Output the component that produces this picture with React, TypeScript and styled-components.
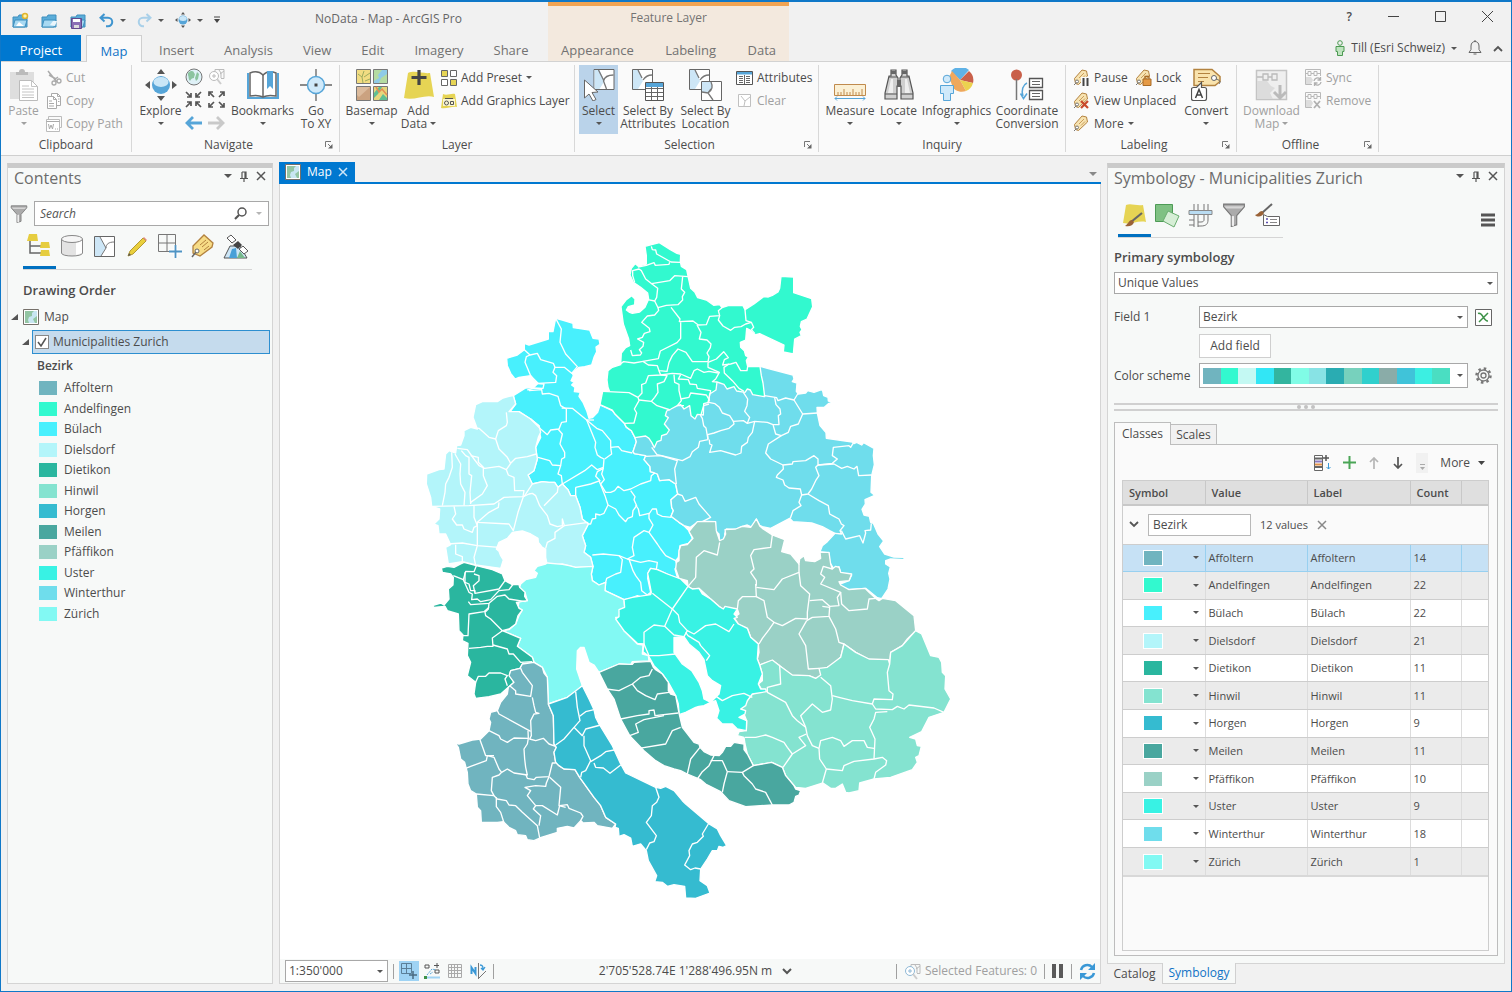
import { useState } from 'react';
import type { ReactNode } from 'react';
import styled, { createGlobalStyle } from 'styled-components';

const GlobalStyle = createGlobalStyle`
  * {
    box-sizing: border-box;
  }

  body {
    margin: 0;
    font-family: "Open Sans", "Noto Sans", sans-serif;
    font-size: 12px;
    line-height: 16px;
    color: #4c4c4c;
  }

  button, input, select {
    margin: 0;
    padding: 0;
    border: 0;
    background: none;
    font: inherit;
    color: inherit;
  }

  svg {
    display: block;
    flex: none;
  }

  h1, h2, h3, ul {
    margin: 0;
    padding: 0;
    font-weight: 400;
    list-style: none;
  }
`;

/* ---------- data ---------- */

const districts = [
  { name: 'Affoltern', color: '#70b4bf', count: 14 },
  { name: 'Andelfingen', color: '#32f9cf', count: 22 },
  { name: 'Bülach', color: '#48f0fd', count: 22 },
  { name: 'Dielsdorf', color: '#b3f5fa', count: 21 },
  { name: 'Dietikon', color: '#2ab69f', count: 11 },
  { name: 'Hinwil', color: '#84e3d0', count: 11 },
  { name: 'Horgen', color: '#35bbd0', count: 9 },
  { name: 'Meilen', color: '#49a79f', count: 11 },
  { name: 'Pfäffikon', color: '#9ad1c6', count: 10 },
  { name: 'Uster', color: '#38f2e4', count: 9 },
  { name: 'Winterthur', color: '#6fddec', count: 18 },
  { name: 'Zürich', color: '#82f9f3', count: 1 },
];

const scheme = [
  '#70b4bf', '#32f9cf', '#c4f9f3', '#32e6f5', '#33b59f', '#80fce6', '#88e3e5',
  '#2aacb2', '#77d1bd', '#30d0cd', '#8aaca8', '#40c3d9', '#3cefe2', '#4adec2',
];

// Every sheet has its own origin, lines are municipality borders
const sheets = [
  {
    x: 0,
    y: 0,
    areas: [
      { color: '#48f0fd', points: '410,268 430,273 462,283 463,296 512,303 522,328 540,330 543,346 531,354 533,368 525,385 518,408 497,413 480,415 460,433 463,440 456,455 466,460 458,468 468,475 466,488 484,490 480,502 492,520 503,545 510,568 520,566 536,550 543,528 580,545 588,555 616,583 622,595 637,605 648,626 652,638 642,668 646,674 680,680 675,692 693,713 694,728 707,732 715,735 722,755 750,752 770,765 776,795 756,812 758,835 763,845 756,862 780,880 795,890 810,905 820,928 808,943 783,950 778,985 770,995 775,1010 768,1020 776,1048 745,1035 715,1022 695,1018 688,1030 686,1048 695,1090 685,1098 670,1105 655,1100 635,1108 615,1112 558,1085 560,1060 540,1068 520,1055 517,1035 522,1012 515,985 495,970 500,950 490,920 508,885 490,870 483,835 470,800 455,800 447,782 430,765 417,775 407,760 390,760 370,758 340,765 327,738 345,725 355,690 350,655 365,625 360,603 360,590 335,570 300,548 270,553 290,525 283,500 320,477 345,475 357,463 345,455 335,440 300,445 288,450 275,433 265,410 263,388 295,378 316,362 316,343 330,348 388,330 388,308 402,308' },
      { color: '#b3f5fa', points: '283,500 290,525 270,548 300,548 335,570 360,590 365,610 358,625 350,655 355,690 345,725 327,738 340,765 370,758 390,760 407,760 417,775 430,765 447,782 455,800 470,800 483,835 490,870 508,885 490,920 500,950 495,970 515,985 522,1012 470,1015 430,1005 385,1010 380,985 380,960 370,955 358,940 357,928 335,915 310,906 280,910 265,928 240,940 232,960 240,967 245,980 253,993 245,1018 170,1008 130,998 88,1005 80,955 95,947 80,915 60,915 57,890 45,885 60,870 62,840 38,832 35,805 22,765 23,735 60,722 75,720 80,675 90,665 110,672 113,650 125,648 135,620 135,605 155,595 175,600 162,565 170,527 190,518 210,517 235,518 252,507 270,502' },
    ],
    lines: [
      '410,268 427,300 423,340 440,375 475,413 458,433 436,415 408,415 403,403 365,392 355,373 333,378 316,362',
      '333,378 322,383 318,400 335,440 357,463 410,460 413,440 402,430 408,415',
      '325,483 345,477 372,478 375,465 345,463',
      '330,485 368,482 370,495 390,493 417,502 425,530 442,540 442,578 428,580 420,600 395,603 385,617 365,600 335,570',
      '417,600 430,615 423,645 437,670 437,685 428,690 425,710 400,708 392,695 357,685',
      '428,537 460,538 503,573 510,590 530,640 528,655 535,678 545,685 555,690 553,715 535,722 518,708 497,725 430,765 427,740 417,735 425,710',
      '503,573 533,598 550,605 575,635 575,655 598,653 608,665 640,672',
      '575,655 578,675 557,690',
      '503,573 525,573',
      '470,775 515,765 543,755 530,742 535,728 553,718 548,735 556,752 545,765 560,790 575,790 587,785 597,772 615,785 635,780 665,765 695,755 697,740 710,730',
      '470,775 470,800',
      '540,755 548,775 558,800 567,828 555,853 543,858 530,855 530,868 520,870 515,885 508,885',
      '567,828 590,840 600,858 620,878 626,868 640,863 642,845 653,830 645,812 648,803 635,785',
      '650,828 658,840 662,860 690,853 690,868 702,888 690,910 675,905 645,925 640,955 645,980 625,990 600,980 553,975 520,978',
      '690,855 700,840 712,840 715,855 730,862 757,865',
      '690,910 715,945 725,960 740,980 770,995',
      '600,980 610,992 605,1030 590,1035 563,1048 560,1060',
      '630,990 642,1025 650,1040 665,1060 668,1085 685,1098',
      '625,990 665,1000 690,995 715,1000 712,1022',
      '165,597 180,598 210,625 230,630 238,605 262,590 265,580 262,550',
      '230,630 240,660 265,685 275,703 290,688 325,683 352,675',
      '115,658 145,662 165,690 180,710 197,718 240,712 262,722 275,703',
      '262,722 268,738 285,745 287,785 315,785 312,803 255,805 225,825 150,830 38,832',
      '98,670 100,715 90,745 80,765 78,790 70,830',
      '108,675 125,705 123,735 125,765 138,790 135,830',
      '127,665 140,680 150,685 150,735 158,740 153,790 155,825',
      '155,680 178,685 178,700 193,715 193,740 205,770 190,795 155,820',
      '240,820 238,835 210,850 175,880 270,885 283,905 297,850 313,803 330,795 340,793 350,800 362,830 385,860 393,885 415,893 430,890 430,870 436,890 508,880',
      '375,830 415,790 417,775',
      '340,765 315,803',
      '436,890 408,910 408,928 385,940 380,958',
      '105,832 110,855 100,870 113,888 130,888 135,900 160,910 165,895 175,890 165,865 165,830',
      '175,880 175,950 240,955',
      '85,945 130,942 175,950 165,985 170,1010',
      '110,947 110,975 130,983 130,998',
    ],
  },
  {
    x: 510,
    y: 0,
    areas: [
      { color: '#6fddec', points: '513,412 535,418 612,438 615,450 610,458 624,462 622,487 628,495 650,492 656,485 675,490 700,481 704,500 717,505 718,516 735,519 718,524 706,535 684,535 685,552 693,590 711,611 712,628 790,639 795,644 803,640 818,648 824,641 855,658 853,680 856,707 848,740 846,790 857,799 828,812 829,825 819,841 825,858 841,862 845,880 853,883 867,915 884,936 872,953 887,975 915,984 945,985 945,992 905,990 890,995 890,1005 904,1014 899,1033 903,1050 897,1080 878,1109 865,1106 845,1090 830,1078 770,1082 757,1075 753,1065 780,1055 788,1038 755,1033 750,1013 735,1020 722,1000 720,972 693,968 700,950 715,938 738,913 722,905 700,893 668,882 612,878 602,868 545,898 520,893 512,889 502,870 490,895 475,888 457,893 440,902 412,900 407,915 409,930 400,938 392,938 390,915 379,905 379,878 357,877 328,878 304,895 285,890 270,880 246,862 253,845 248,835 246,812 266,795 260,765 240,752 212,755 205,735 197,732 184,728 183,713 165,692 170,680 136,674 132,668 142,638 138,626 180,600 230,530 384,440' },
      { color: '#32f9cf', points: '168,52 211,41 244,62 264,73 275,76 274,98 277,112 293,122 298,146 305,178 318,190 326,206 352,213 374,229 392,227 399,236 420,229 462,230 468,242 474,238 495,225 524,203 538,204 550,199 567,189 572,178 576,142 614,144 614,191 668,209 671,233 654,270 637,278 634,292 639,302 633,310 637,320 617,330 613,375 583,369 585,348 512,314 498,318 483,303 473,298 470,333 454,340 455,355 466,365 470,380 478,384 472,395 476,413 513,412 517,440 522,462 527,503 491,497 484,483 475,480 468,490 443,486 435,473 414,480 405,466 384,459 381,483 362,495 359,520 344,524 343,558 325,556 318,570 306,560 302,530 285,540 275,527 265,530 246,540 233,546 229,560 238,566 226,585 241,603 233,615 218,620 216,634 204,638 196,656 188,640 180,628 170,621 138,626 127,605 112,594 106,583 78,555 70,543 33,527 41,487 61,485 57,475 54,453 57,425 70,415 95,407 97,372 110,356 122,350 119,330 103,285 96,233 112,212 128,200 138,210 137,228 118,233 112,243 122,250 130,253 152,249 168,235 179,210 176,192 155,175 133,160 123,138 127,118 139,104 147,111 172,105 172,80' },
    ],
    lines: [
      '187,52 190,62 200,63 203,75 246,99 274,100',
      '147,114 172,109 195,101 199,109 240,106 242,100',
      '137,160 131,140 131,125 150,120 157,125 170,150 188,164 242,155 257,140 297,143',
      '188,164 206,178 203,205 197,216 176,212',
      '281,143 277,180 287,190 280,203 281,213 267,227 232,229 207,236 203,228 197,216',
      '207,236 209,244 197,258 175,261 158,280 181,298 183,308 166,313 160,325 146,330 164,340 162,352 151,362 158,372 154,378 130,380 125,363',
      '246,235 273,270 271,278 312,276 328,288 352,287 362,262 392,260 388,245 399,236',
      '275,280 275,328 264,341 214,366 208,389 162,397 135,402 104,398 95,404',
      '324,288 336,310 331,330 354,333 366,345 364,356 354,372 360,383 357,398 310,398 291,370 267,360 250,380 240,400 234,427 210,425 205,410 178,408 162,397',
      '392,260 388,273 402,291 425,304 437,295 456,293 470,285 487,280 494,295 487,302 498,314',
      '468,242 471,275 487,280',
      '357,400 382,390 404,368 418,386 406,392 401,408 425,405 441,400 455,425 474,425 476,413',
      '357,400 357,415 391,430 380,450 370,458 384,459',
      '420,405 405,415 406,432 430,455 450,478 465,487',
      '215,438 250,433 275,435 305,448 315,425 325,420 345,430 360,427 388,432',
      '210,425 215,438 178,440 170,462 158,467 159,492 147,505 120,491 41,487',
      '147,505 150,515 136,540 143,552 135,582 106,583',
      '150,513 187,517 204,530 244,543',
      '187,517 197,505 207,490 205,465 225,458 234,440 215,438',
      '255,437 257,460 270,466 270,485 277,515 265,530 285,530',
      '275,437 268,450 298,452 303,465 322,467 325,478 365,485 357,520',
      '275,510 300,505 305,492 352,498 362,515',
      '527,500 563,506 567,515 590,507 615,513 626,495 630,490',
      '557,506 561,527 573,540 575,555 568,560 570,587 552,587',
      '615,513 641,555 685,552',
      '641,555 628,585 605,592 598,610 577,620 560,615 552,587 535,580 497,577 475,583 463,575 433,577 422,560 400,552 391,535 378,524 359,520',
      '463,490 476,510 474,530 467,547 482,565 475,583',
      '360,525 344,530 335,560 340,568 344,590 351,597 357,632 332,637 328,655 310,668 303,683 280,695 218,680 204,677 188,655',
      '361,632 362,645 369,648 362,670 395,665 440,678 456,672 458,652 475,640 478,625 490,610 497,577',
      '357,630 356,617 375,612 395,605 420,598 435,585 433,577',
      '577,620 538,645 530,672 545,690 582,708 610,705 612,698 650,695 675,680 687,690 687,708 730,703 745,690 730,680 733,655 780,650 785,655 792,643',
      '687,708 735,705 758,718 775,712 795,720 804,712 809,740 848,738',
      '582,708 583,720 565,738 562,745 582,753 587,768 600,777 634,780 638,798 657,795 668,780 680,755 690,740 680,715 687,708',
      '638,798 630,820 636,830 612,845 604,868',
      '657,795 690,815 718,830 722,855 735,862 750,870 757,885 765,890 753,905 758,915 738,913',
      '757,905 770,930 812,920 822,942 830,912 828,905 845,903 847,883',
      '170,682 215,680 265,695 257,720 262,765',
      '266,795 280,800 288,817 320,805 330,825 350,848 365,865 340,878',
    ],
  },
  {
    x: 0,
    y: 930,
    areas: [
      { color: '#82f9f3', points: '345,95 355,82 380,75 385,72 430,76 450,80 470,85 522,82 517,105 520,125 540,138 560,130 558,155 615,182 617,205 605,212 600,235 590,235 615,275 655,315 672,318 670,345 688,350 690,366 640,368 635,378 600,375 540,400 525,378 510,370 495,325 485,325 475,335 473,390 490,440 470,458 445,475 388,495 385,415 370,385 345,370 340,355 295,322 305,298 250,275 270,272 290,255 300,230 310,213 297,205 300,188 325,185 318,160 300,150 305,135 320,122 350,115 355,103' },
      { color: '#2ab69f', points: '67,87 85,82 105,85 125,75 135,70 172,80 220,92 250,105 258,125 280,137 300,137 302,145 318,160 317,172 325,185 292,190 300,208 310,213 297,230 290,255 270,270 250,275 305,298 295,322 340,355 345,370 310,375 303,388 275,395 272,408 285,430 268,445 245,465 210,473 170,478 165,465 170,430 145,410 155,370 145,350 147,313 130,305 132,288 120,275 118,225 85,215 78,202 45,205 40,200 65,192 75,198 90,180 88,150 102,138 103,115 95,105 70,100' },
      { color: '#70b4bf', points: '310,375 345,370 370,385 375,402 385,415 388,495 403,530 405,615 412,625 405,640 410,670 420,680 435,690 468,692 482,715 525,775 545,800 560,835 590,855 580,868 535,860 525,850 492,852 485,845 465,867 445,862 415,868 415,880 362,897 345,905 325,902 320,890 295,887 290,875 270,865 253,848 235,850 187,850 185,815 175,805 172,765 155,755 147,735 145,700 137,670 125,660 118,625 108,612 120,615 160,603 185,600 210,575 215,550 210,540 215,520 235,515 245,490 265,465 268,445 285,430 270,410 275,395 303,388' },
      { color: '#35bbd0', points: '388,495 445,475 490,440 510,480 525,512 530,535 540,555 580,620 605,675 620,702 710,745 725,748 740,742 765,755 790,785 800,795 868,853 895,870 905,890 923,920 912,925 900,922 895,935 880,935 865,960 845,990 843,1025 865,1040 873,1062 830,1078 800,1077 797,1042 765,1037 745,1042 730,1030 707,1028 713,1010 688,965 682,935 665,915 640,922 635,897 615,887 600,892 598,868 588,865 590,855 560,835 545,800 525,775 482,715 468,692 435,690 420,680 410,670 405,640 412,625 405,615 403,530' },
    ],
    lines: [
      '103,110 133,122 140,97 165,98 172,80',
      '138,100 138,130 150,135 155,155 168,155 168,163 163,140 180,125 180,110 165,105',
      '133,122 150,160 160,165 158,182 175,180 185,188 215,182 240,155 270,152 283,135',
      '258,125 240,150 168,163',
      '148,188 155,197 210,193 235,172 258,168 270,180 320,188',
      '210,193 208,210 198,220 200,230 215,240 250,275 220,297 222,322 205,322 185,325 150,328',
      '210,205 195,218 150,225 147,290 130,290',
      '222,318 265,330 270,345 283,345 305,370 340,368',
      '170,430 178,412 200,412 210,402 245,402 265,410 258,420 265,440',
      '272,440 290,455 290,465 335,472 340,440 310,400 305,388',
      '235,515 240,525 335,577',
      '340,475 345,500 350,520 360,523 345,525 335,545 337,590 332,600 350,605 373,598 390,615 410,622',
      '210,575 240,590 245,600 265,610 285,597 328,598 327,575',
      '328,598 325,615 315,630 317,660 320,685 325,708 285,702 265,690 248,700 240,690 225,655 205,650 202,665 155,682 140,688',
      '182,600 193,630 200,650 225,650',
      '320,705 325,718 345,722 352,715 390,713 400,672 410,672',
      '248,700 240,708 220,715 217,755 225,770 172,765',
      '225,770 235,780 262,785 270,798 290,800 310,820 355,860 362,897',
      '232,775 232,803 245,820 255,852',
      '390,713 382,732 380,742 350,740 318,745 335,755 325,770 350,800 370,800 415,828 422,800 445,797 450,808 485,822 492,832 485,845 492,852',
      '392,715 425,745 420,800 440,805',
      '350,800 343,810 365,830 360,860',
      '470,458 475,505 483,545 465,565 435,600 410,618',
      '482,532 500,518 525,512',
      '465,565 490,590 500,570 545,558',
      '495,590 495,620 515,665 500,695 488,700 485,715',
      '515,668 545,650 560,638 585,633',
      '525,672 530,685 553,687 573,703 605,678',
      '710,745 720,775 713,790 700,800 697,830 682,850 712,890 705,908 692,912 682,932',
      '868,855 850,885 853,892 835,910 820,915 810,935 812,950 797,978 815,992 828,987 845,990',
    ],
  },
  {
    x: 600,
    y: 840,
    areas: [
      { color: '#9ad1c6', points: '207,232 205,215 180,208 170,180 172,160 180,155 180,125 185,110 205,107 222,88 210,68 220,55 235,38 290,38 292,65 302,95 313,90 320,75 318,62 350,60 370,52 395,55 412,30 423,52 430,58 460,78 497,92 488,128 515,135 540,165 542,150 555,140 560,155 587,158 605,148 603,130 630,130 635,165 640,180 650,172 660,175 665,190 698,195 690,215 660,218 665,228 690,242 738,238 750,250 770,268 780,275 790,268 830,275 885,320 890,365 865,390 850,410 830,422 815,430 812,465 750,452 710,430 675,405 665,445 640,468 625,475 605,505 590,508 570,500 520,500 482,470 460,455 422,468 415,450 420,430 418,405 395,385 385,358 358,345 345,325 360,315 355,300 310,300 300,292 275,270 240,238 220,240' },
      { color: '#84e3d0', points: '890,365 908,375 935,440 960,445 968,460 970,490 980,500 978,540 995,570 975,610 930,625 908,668 872,685 890,690 895,710 907,712 900,740 890,745 895,760 880,782 815,805 765,810 722,822 720,845 690,852 680,850 670,825 650,838 635,838 612,822 560,838 530,835 500,800 490,775 458,760 403,770 385,735 378,705 375,685 355,680 360,668 382,665 383,635 375,615 365,600 385,575 400,555 430,545 418,525 430,515 430,495 422,468 460,453 482,470 520,498 570,500 590,508 605,498 600,478 625,475 665,445 675,405 710,430 750,450 808,452 812,465 815,430 850,410' },
      { color: '#38f2e4', points: '86,193 95,178 115,182 145,195 185,210 207,232 220,240 240,238 250,255 275,270 300,292 313,300 318,292 355,300 345,315 355,325 345,328 358,345 385,358 395,385 418,405 415,450 422,468 430,495 418,525 425,540 440,540 442,548 400,555 385,575 380,590 365,600 380,605 378,615 360,625 383,635 382,665 355,660 340,645 310,645 293,628 300,605 290,575 275,580 255,590 240,592 230,595 200,610 180,617 180,612 178,585 170,560 148,520 130,495 105,470 88,440 72,428 75,405 55,403 15,365 -10,330 0,323 0,302 17,295 15,272 40,265 95,257 97,250' },
      { color: '#49a79f', points: '-60,490 0,465 40,466 45,460 95,457 103,475 110,482 130,495 148,520 148,545 155,555 170,560 180,612 190,655 225,700 240,705 243,715 255,728 275,738 300,740 310,730 320,712 335,712 345,700 375,705 375,722 385,735 403,770 458,760 490,775 500,800 525,830 530,840 545,845 540,858 530,862 525,880 510,888 460,888 380,893 330,875 305,848 260,825 245,812 205,795 185,785 165,780 135,770 110,755 75,725 32,680 5,630 -15,570 -35,540' },
      { color: '#ffffff', points: '165,385 195,383 210,405 240,430 255,452 265,500 280,515 305,530 300,555 275,580 255,570 250,545 240,520 218,485 190,465 165,430' },
    ],
    lines: [
      '-38,540 0,545 40,525 65,505 90,500 100,480',
      '40,525 55,545 80,560 108,572 115,555 150,550',
      '5,630 55,620 90,615 90,605 105,603 108,620 178,612',
      '32,680 58,670 50,645 75,632 135,620',
      '60,718 140,705 160,665 185,655',
      '205,795 215,750 243,715',
      '235,810 250,788 270,770 285,740',
      '275,755 310,755 325,788 315,825 310,850',
      '325,788 370,790 403,770',
      '370,790 375,800 400,825 410,840 440,850 460,888',
      '100,253 160,300 207,232',
      '160,300 137,352 105,348 75,370 75,405 90,440',
      '160,300 178,318 182,340 205,365 225,375 260,350 290,345 330,368 345,345',
      '137,352 165,378 195,383 205,365',
      '200,370 207,380 240,400 245,410 272,440 262,455',
      '88,440 120,440 170,435',
      '288,560 310,575 340,560 375,553 400,565',
      '207,232 230,205 232,145 255,125 295,138 302,100',
      '410,225 412,263 370,263 358,275 355,300',
      '412,263 435,275 445,325 465,340 450,362 430,388 420,405',
      '412,230 412,215 395,190 405,180 395,140 405,122 455,115 460,78',
      '412,235 465,242 490,210 540,190 540,165',
      '540,190 545,230 572,255 565,310 565,330 530,328 490,350 465,340',
      '563,335 580,325 630,322 632,295 610,292',
      '572,275 610,272 632,292 660,290 655,265 665,250 605,225 617,205 605,195 613,172 640,180',
      '630,322 650,360 660,400 675,405',
      '563,335 540,375 560,410 568,480 600,478',
      '665,250 668,285 690,305 745,300 750,270 770,268',
      '482,470 485,525 445,535 445,550 500,580 520,620 535,635 560,655',
      '605,505 635,530 640,570 635,603 610,610 580,585 545,620 560,655 565,680 580,710 600,718',
      '640,560 660,565 700,575 760,585 765,570 820,572 822,555 810,545 805,490 812,465',
      '760,585 770,600 820,602 835,592 855,600 870,588 945,597 975,610',
      '805,608 770,610 765,630 752,655 768,690 765,750',
      '600,718 605,695 640,685 665,695 675,712 700,695 735,695 745,715 765,718',
      '600,718 602,750 622,780 610,822',
      '622,780 670,785 675,770 705,757 765,750 790,745 803,755 800,768 770,790 765,810',
      '378,685 410,685 440,678 460,685 495,700 505,715 520,735 492,775',
      '520,735 560,710 540,685 562,675',
    ],
  },
];

/* ---------- small drawings ---------- */

type IconProps = { size?: number; w?: number; box?: string; children: ReactNode };

const Icon = ({ size = 16, w, box, children }: IconProps) => (
  <svg width={w ?? size} height={size} viewBox={box ?? `0 0 ${w ?? size} ${size}`} fill="none" aria-hidden="true">
    {children}
  </svg>
);

const Caret = ({ color = '#555' }: { color?: string }) => (
  <Icon size={3} w={6}><path d="M0 0h6L3 3z" fill={color} /></Icon>
);

const Cross = ({ color = '#555' }: { color?: string }) => (
  <Icon size={10}><path d="M1 1l8 8M9 1L1 9" stroke={color} strokeWidth="1.5" /></Icon>
);

const Pin = () => (
  <Icon size={11} w={8}><path d="M2 1v6M2 1h4v6M5 1v6M0 7.500h8M4 8v3" stroke="#555" strokeWidth="1.200" /></Icon>
);

const Launcher = () => (
  <Icon size={8}><path d="M.5 6V.5H6M3 3l3 3" stroke="#777" /><path d="M7.500 3v4.500H3z" fill="#666" /></Icon>
);

const ExploreIcon = ({ size = 32 }: { size?: number }) => (
  <Icon size={size} box="0 0 32 32">
    <circle cx="16" cy="16" r="9" fill="#56a5d8" />
    <ellipse cx="16" cy="13" rx="7.500" ry="5" fill="#c9e6f7" />
    <path d="M16 0l4 5h-8zM16 32l4-5h-8zM0 16l5-4v8zM32 16l-5-4v8z" fill="#555" />
  </Icon>
);

const PasteIcon = () => (
  <Icon size={32} w={30}>
    <path d="M1 3h24v27H1z" fill="#dedede" />
    <path d="M7 6h12V3h-3a3 3 0 00-6 0H7z" fill="#bbb" />
    <path d="M10.500 11.500h12l6 6v14h-18z" fill="#fff" stroke="#bbb" />
    <path d="M22.500 11.500v6h6M13 17h7M13 20h12M13 23h12M13 26h12M13 28.500h12" stroke="#c4c4c4" />
  </Icon>
);

const CutIcon = () => (
  <Icon><path d="M2 1l9 11M3 5l7 4M12 7l-4 3" stroke="#aaa" strokeWidth="1.500" /><circle cx="8" cy="13" r="2" stroke="#aaa" strokeWidth="1.300" /><circle cx="13" cy="11" r="2" stroke="#aaa" strokeWidth="1.300" /></Icon>
);

const CopyIcon = () => (
  <Icon><path d="M5.500 3.500v-3h6l3 3v9h-4M1.500 3.500h6l3 3v9h-9z" stroke="#aaa" fill="#fff" /><path d="M7.500 3.500v3h3M3 8h3M3 10.500h5M3 13h5M11.500.5v3h3M12 6h1.500M12 8.500h1.500" stroke="#aaa" /></Icon>
);

const CopyPathIcon = () => (
  <Icon><path d="M2.500 3V.5h13v11H14" stroke="#bbb" /><path d="M.5 3.500h13v12H.5z" fill="#fff" stroke="#bbb" /><path d="M.5 5.500h13M2.500 8l1 5 1.500-4 1.500 4 1-5M9 13h1M11 13h1" stroke="#aaa" /></Icon>
);

const GlobeIcon = () => (
  <Icon size={18}><circle cx="9" cy="9" r="8" fill="#dff1f7" stroke="#777" /><path d="M3 5c3-3 6-2 6 0 2 1 0 3 0 5-2 0-3 1-4 3C3 11 4 9 3 7zM12 4l2 2-1 5-2 2-1-3z" fill="#8cc4a0" /></Icon>
);

const ZoomSelIcon = ({ color = '#bbb' }: { color?: string }) => (
  <Icon size={17}><path d="M7 4.500V1.500h9v9h-3M11 2l2 3v5M16 3l-4 3" stroke="#bbb" /><circle cx="6" cy="8" r="4.500" fill="#fff" stroke={color} /><path d="M4 8h4M6 6v4" stroke={color} /><path d="M9 11l4 5" stroke="#ccc" strokeWidth="2" /></Icon>
);

const arrowHeads = {
  in: 'M1 1l5 5M6 2v4H2M16 1l-5 5M11 2v4h4M1 16l5-5M2 11h4v4M16 16l-5-5M15 11h-4v4',
  out: 'M6 6L1 1M1 5V1h4M11 6l5-5M12 1h4v4M6 11l-5 5M1 12v4h4M11 11l5 5M16 12v4h-4',
};

const FixedZoomIcon = ({ kind }: { kind: 'in' | 'out' }) => (
  <Icon size={17}><path d={arrowHeads[kind]} stroke="#555" strokeWidth="1.700" /></Icon>
);

const BackIcon = ({ color, flip }: { color: string; flip?: boolean }) => (
  <Icon size={14} w={17}><path d={flip ? 'M0 7h15M9 1l6 6-6 6' : 'M17 7H2M8 1L2 7l6 6'} stroke={color} strokeWidth="2.800" /></Icon>
);

const BookIcon = () => (
  <Icon size={30} w={34}>
    <path d="M2 3v25h30V3" stroke="#56a5d8" strokeWidth="2" />
    <path d="M4 3c5-2 10-1 13 2 3-3 8-4 13-2v23c-5-1-9-1-13 1-4-2-8-2-13-1z" fill="#fff" stroke="#666" strokeWidth="1.500" />
    <path d="M17 5v22" stroke="#666" strokeWidth="1.500" />
    <path d="M21 1h6v18l-3-3-3 3z" fill="#56a5d8" />
  </Icon>
);

const GoToIcon = () => (
  <Icon size={32}><path d="M16 0v7M16 25v7M0 16h7M25 16h7" stroke="#666" strokeWidth="1.300" /><circle cx="16" cy="16" r="8.500" fill="#cfe9fa" stroke="#56a5d8" strokeWidth="1.500" /><path d="M14.500 14.500h3v3h-3z" fill="#444" /></Icon>
);

const BasemapIcon = () => (
  <Icon size={32}>
    <path d="M.5.500h14v14H.5z" fill="#f2dc82" stroke="#777" /><path d="M2 5l4 3 2-6M6 8l1 6M8 8l6-4M9 12l5-2" stroke="#9dab5e" />
    <path d="M17.500.500h14v14h-14z" fill="#8fcbe8" stroke="#777" /><path d="M18 1h8l-4 5 1 3-5 3zM25 9l6-4v9h-8z" fill="#b5dba2" />
    <path d="M.5 17.500h14v14H.5z" fill="#cba280" stroke="#777" /><path d="M1 18h13L3 28l-2-2z" fill="#dcbb9d" />
    <path d="M17.500 17.500h14v14h-14z" fill="#e6d67c" stroke="#777" /><path d="M18 24l5-6h3l-4 7-4 4zM23 31l4-6 4 4v2z" fill="#5fbf93" /><path d="M20 18l3 5 3-3 5 6" stroke="#e28d55" strokeWidth="1.500" />
  </Icon>
);

const AddDataIcon = () => (
  <Icon size={32}><path d="M5 4c7-3 15 1 22 0l4 24c-9-3-20 4-30 1z" fill="#e6d454" /><path d="M16 1v15M8.500 8.500h15" stroke="#444" strokeWidth="3.200" /></Icon>
);

const PresetIcon = () => (
  <Icon><path d="M.5.500h6v6h-6zM9.500 9.500h6v6h-6z" fill="#e6d454" stroke="#666" /><path d="M9.500.500h6v6h-6zM.5 9.500h6v6h-6z" fill="#fff" stroke="#666" /></Icon>
);

const GraphicsIcon = () => (
  <Icon><path d="M2 1c4 2 8-1 12 0l2 13c-5-1-10 2-16 1z" fill="#e6d454" /><path d="M2 6h12v7H2z" fill="#f9f5d0" /><circle cx="5.500" cy="10" r="2" stroke="#555" /><path d="M9.500 8.500h3v3h-3zM4 5.500h8" stroke="#555" /></Icon>
);

const parcel = 'M.5.500h20v20H.5z';

const SelectIcon = () => (
  <Icon size={32}>
    <g transform="translate(10.500 0)"><path d={parcel} fill="#fff" stroke="#666" /><path d="M1 1h5l5 11-5 8H1z" fill="#cde6f6" /><path d="M5 1l5 10M20 6c-5 0-9 2-10 6l3 8" stroke="#777" strokeWidth="1.300" /></g>
    <path d="M1.500 11l13.500 12-6 .5 4 7-3 1.500-4-7-4.500 4z" fill="#fff" stroke="#666" />
  </Icon>
);

const SelectAttrIcon = () => (
  <Icon size={32}>
    <path d={parcel} fill="#fff" stroke="#666" /><path d="M1 1h5l5 11-5 8H1z" fill="#cde6f6" /><path d="M6 1l4 8M20 6c-4 0-7 2-9 5" stroke="#777" strokeWidth="1.300" />
    <path d="M13.500 13.500h18v18h-18z" fill="#fff" stroke="#555" /><path d="M14 14h17v4H14z" fill="#56a5d8" /><path d="M14 19.500h17M14 23.500h17M14 27.500h17M19.500 18v13M25.500 18v13" stroke="#666" />
  </Icon>
);

const SelectLocIcon = () => (
  <Icon size={32} w={33}>
    <path d={parcel} fill="#fff" stroke="#666" /><path d="M1 1h5l5 11-5 8H1z" fill="#cde6f6" /><path d="M6 1l4 8M20 6c-4 0-7 2-9 5" stroke="#777" strokeWidth="1.300" />
    <path d="M12.500 12.500h20v19h-20z" fill="#fff" stroke="#666" /><path d="M13 13h9c3 6 0 9-3 11l-6-1z" fill="#cde6f6" /><path d="M22 13c3 6 0 9-3 11l5 7M13 23l6 1 3-4" stroke="#777" strokeWidth="1.300" />
  </Icon>
);

const AttributesIcon = () => (
  <Icon size={14} w={17}><path d="M.5.500h16v13H.5z" fill="#fff" stroke="#555" /><path d="M1 1h15v2.500H1z" fill="#56a5d8" /><path d="M3 5.500h4M3 7.500h4M3 9.500h4M3 11.500h4M10 5.500h4M10 7.500h4M10 9.500h4M10 11.500h4M8.500 4v9" stroke="#666" /></Icon>
);

const ClearIcon = () => (
  <Icon size={13} w={17} box="-2 0 17 13"><path d="M.5.500h12v12H.5z" stroke="#c0c0c0" fill="#fff" /><path d="M3 2l4 5 5-4M7 7l-1 5" stroke="#c0c0c0" /></Icon>
);

const MeasureIcon = () => (
  <Icon size={32}><path d="M.5 15.500h31v11H.5z" fill="#fbf0d5" stroke="#c08a4d" /><path d="M4 27v-4M7 27v-4M10 27v-7M13 27v-4M16 27v-4M19 27v-7M22 27v-4M25 27v-4M28 27v-7" stroke="#c08a4d" /><path d="M1 29.500h30M3 27.500l-2 2 2 2M29 27.500l2 2-2 2" stroke="#56a5d8" /></Icon>
);

const LocateIcon = () => (
  <Icon size={32} w={30}>
    <path d="M7 1h5v5l2 3v8h-1v13H1V24L5 7h2zM23 1h-5v5l-2 3v8h1v13h12v-6L25 7h-2z" fill="#cfcfcf" stroke="#555" strokeWidth="1.200" />
    <path d="M7 2h5v3H7zM18 2h5v3h-5zM13 11h4v7h-4z" fill="#666" />
    <path d="M1 25h12M17 25h12M5 8h8M17 8h8" stroke="#555" />
    <path d="M7 10L4 24h5V10z" fill="#eee" /><path d="M21 10v14h5L23 10z" fill="#eee" />
  </Icon>
);

const InfographicsIcon = () => (
  <Icon size={33} w={34}>
    <path d="M20 12L11 3a13 13 0 0118-1z" fill="#5fb2e6" /><path d="M20 12l9-9a12 12 0 014 12z" fill="#c9604a" /><path d="M20 12l13 3a12 12 0 01-7 8z" fill="#ecd24f" /><path d="M20 12l6 11c-5 2-13 0-14-6L9 9l3-6z" fill="#efa85c" />
    <circle cx="7" cy="11" r="3.800" fill="#cfe9fa" stroke="#56a5d8" /><path d="M.5 17.500h13v8h-3v7h-7v-7h-3z" fill="#cfe9fa" stroke="#56a5d8" />
  </Icon>
);

const CoordIcon = () => (
  <Icon size={32} w={33}>
    <circle cx="5.500" cy="6" r="5.500" fill="#c9604a" /><path d="M5.500 10v21" stroke="#777" strokeWidth="1.500" />
    <path d="M18.500 9.500h13v9h-13zM18.500 21.500h13v9h-13z" fill="#fff" stroke="#555" strokeWidth="1.300" /><path d="M21 12.500h8M21 15.500h8M21 24.500h8M21 27.500h8" stroke="#666" />
    <path d="M16 14c-4 2-6 7-4 13M9.500 24.500l3 5 3.500-5" stroke="#56a5d8" strokeWidth="1.500" />
  </Icon>
);

const tag = 'M1.500 9.500L9 1l4.500 1 1 5-9 8.500-3-1z';

const TagIcon = ({ mark }: { mark?: 'pause' | 'lock' | 'cross' }) => (
  <Icon size={17}>
    <path d={tag} fill="#f7e3b1" stroke="#b3823f" /><path d="M6 9l5-5M8 10.500l4-4" stroke="#c99c5a" /><circle cx="4" cy="12.500" r="1.500" fill="#fff" stroke="#777" /><path d="M3 14l-2 2" stroke="#777" />
    {mark === 'pause' && <><path d="M8 8h9v9H8z" fill="#fafafa" /><path d="M10.500 9v8M14.500 9v8" stroke="#444" strokeWidth="2" /></>}
    {mark === 'lock' && <><path d="M8 10h8v6.500H8z" fill="#e59a45" stroke="#a86b26" /><path d="M10 10V7.500h4V10" stroke="#a86b26" strokeWidth="1.300" /></>}
    {mark === 'cross' && <path d="M8 9l7 7M15 9l-7 7" stroke="#c8492b" strokeWidth="2.200" />}
  </Icon>
);

const ConvertIcon = () => (
  <Icon size={33} w={31}>
    <path d="M3 1.500h18l8 7v5l-5 4H3z" fill="#f9e3ad" stroke="#b3823f" strokeWidth="1.500" /><path d="M7 5.500h12M7 9.500h10M7 13.500h6" stroke="#b3823f" /><circle cx="23" cy="10" r="2.500" fill="#fff" stroke="#666" /><path d="M25 11c4 1 5 3 3 5" stroke="#666" />
    <path d="M.5 21.500q0-2 2-2h3l5-5v5h3q2 0 2 2v9q0 2-2 2h-11q-2 0-2-2z" fill="#fff" stroke="#555" strokeWidth="1.200" /><path d="M4.500 30L8 21.500l3.500 8.500M6 27h4" stroke="#444" strokeWidth="1.500" />
  </Icon>
);

const DownloadIcon = () => (
  <Icon size={32} w={33}><path d="M1.500 1.500h30v29h-30z" fill="#efefef" stroke="#c4c4c4" strokeWidth="1.500" /><path d="M2 8h6v-3h5v6H8V8M13 8h4V5h5v6h-5V8" stroke="#bbb" strokeWidth="1.300" /><path d="M2 12h10l4 5 4 2-5 5 3 6H2z" fill="#dcdcdc" /><path d="M25 16v12M19 23l6 6 6-6" stroke="#bbb" strokeWidth="3" /></Icon>
);

const SyncIcon = ({ remove }: { remove?: boolean }) => (
  <Icon size={17}><path d="M.5 15.500V.5h15V7M.5 15.500H7M1 4.500h2V2.500h3v4H3v-2M6 4.500h3V2.500h3v4H9v-2M12 4.500h3" stroke="#b9b9b9" /><path d="M1 8h5l2 3-2 4H1z" fill="#ddd" />
    {remove ? <path d="M9 9l6 7M15 9l-6 7" stroke="#b0b0b0" strokeWidth="1.800" /> : <path d="M9 12a3.500 3.500 0 016-2M15.500 8v3h-3M16 13a3.500 3.500 0 01-6 2M9.500 17v-3h3" stroke="#b0b0b0" strokeWidth="1.300" />}
  </Icon>
);

const MapIcon = () => (
  <Icon size={16}><path d="M.5.500h15v15H.5z" fill="#fff" stroke="#75706a" /><path d="M2 2h12v12H2z" fill="#c8e6f2" /><path d="M2 2h9l-2 2v3l-3 1-1 3 1 3H2zM10 10l4-3v7h-2z" fill="#93c5a3" /></Icon>
);

const FunnelIcon = ({ size = 18 }: { size?: number }) => (
  <Icon size={size} box="0 0 20 22"><path d="M.5 1h19v2.500l-7 8V20l-5 1.500v-10l-7-8z" fill="#ababab" stroke="#777" /><path d="M1 3h18l-2 2H3z" fill="#d5d5d5" /><path d="M8 12h2v9H8z" fill="#eee" /></Icon>
);

const FolderIcon = ({ extra }: { extra?: 'new' | 'save' }) => (
  <Icon size={17} w={18}>
    <path d="M1 5h5l1-2h8v12H1z" fill="#5badd9" stroke="#3f8fbe" /><path d="M3 8h12l-2 7H1z" fill="#a8d9f2" stroke="#3f8fbe" />
    {extra === 'new' && <><path d="M4 14l3-4 5 4z" fill="#fff" /><circle cx="13" cy="4" r="2.500" fill="#fff3a8" stroke="#e0b52d" strokeWidth="1.500" /></>}
    {extra === 'save' && <><path d="M1.500 6.500h10v10h-10z" fill="#8a6fb5" stroke="#60498c" /><path d="M3 7h7v3H3z" fill="#fff" /><path d="M4 13h5v3H4z" fill="#ddd" /></>}
    {!extra && <path d="M9 13l3-4 4 0-2 5z" fill="#eaf6fc" />}
  </Icon>
);

const UndoIcon = ({ color, flip }: { color: string; flip?: boolean }) => (
  <Icon size={15}><path d={flip ? 'M9.500 1l4 3.800-4 3.700M13 4.800H6a4 4 0 000 8.500h1' : 'M5.500 1l-4 3.800 4 3.700M2 4.800h7a4 4 0 010 8.500H7'} stroke={color} strokeWidth="2" /></Icon>
);

/* ---------- window ---------- */

const Window = styled.div`
  display: flex;
  flex-direction: column;
  min-height: 100vh;
  background: #f1f1f1;
  border: 1px solid #0f78c8;
  border-top-width: 2px;
`;

const Header = styled.header`
  display: flex;
  height: 60px;
  border-bottom: 1px solid #d2d2d2;
`;

const HeaderColumn = styled.div<{ $width?: number }>`
  display: flex;
  flex-direction: column;
  justify-content: space-between;
  ${(props) => (props.$width ? `width: ${props.$width}px;` : 'flex: 1;')}
`;

const ContextColumn = styled.div`
  display: flex;
  flex-direction: column;
  justify-content: space-between;
  width: 241px;
  border-top: 4px solid #f1a453;
  background: #f3e9de;
  text-align: center;
`;

const ContextTitle = styled.div`
  padding-top: 4px;
  color: #737373;
`;

const TitleRow = styled.div`
  display: flex;
  align-items: center;
  height: 33px;
`;

const QuickAccess = styled.div`
  display: flex;
  align-items: center;
  gap: 11px;
  width: 228px;
  padding: 3px 0 0 11px;
`;

const PlainButton = styled.button`
  display: flex;
  align-items: center;
  gap: 6px;
`;

const AppTitle = styled.h1`
  flex: 1;
  font-size: 12px;
  text-align: center;
  color: #666;
`;

const Tabs = styled.nav<{ $spread?: boolean }>`
  display: flex;
  height: 26px;
  ${(props) => (props.$spread ? 'justify-content: space-between; padding: 0 13px;' : '')}
`;

const Tab = styled.button<{ $kind?: 'project' | 'active'; $tight?: boolean }>`
  height: 26px;
  padding: ${(props) => (props.$tight ? '4px 0 0 0' : '4px 15px 0 15px')};
  font-size: 13px;
  color: #727272;

  ${(props) => props.$kind === 'project' && `
    width: 80px;
    margin-right: 5px;
    background: #0078d0;
    color: #fff;
  `}

  ${(props) => props.$kind === 'active' && `
    width: 56px;
    height: 27px;
    padding: 3px 0 0 0;
    margin-right: 2px;
    border: 1px solid #cfcfcf;
    border-bottom: 0;
    background: #fafafa;
    color: #1073c6;
  `}
`;

const WindowControls = styled.div`
  display: flex;
  align-items: center;
  justify-content: flex-end;
  gap: 36px;
  height: 29px;
  padding-right: 18px;
  font-weight: 600;
`;

const UserRow = styled.div`
  display: flex;
  align-items: center;
  justify-content: flex-end;
  gap: 11px;
  height: 26px;
  padding-right: 8px;
`;

const Ribbon = styled.div`
  display: flex;
  height: 94px;
  padding-top: 3px;
  background: #fafafa;
  border-bottom: 1px solid #cfcfcf;
`;

const Group = styled.section<{ $width: number }>`
  display: flex;
  flex-direction: column;
  flex: none;
  width: ${(props) => props.$width}px;
  height: 87px;
  border-right: 1px solid #d8d8d8;
`;

const GroupBody = styled.div`
  display: flex;
  height: 74px;
  padding-left: 4px;
`;

const GroupLabel = styled.div<{ $launcher?: boolean }>`
  display: grid;
  grid-template-columns: ${(props) => (props.$launcher ? '1fr 14px' : '1fr')};
  align-items: center;
  height: 14px;
  line-height: 14px;
  text-align: center;
`;

const BigButton = styled.button<{ $width: number; $active?: boolean }>`
  display: flex;
  flex-direction: column;
  align-items: center;
  flex: none;
  width: ${(props) => props.$width}px;
  height: 69px;
  padding-top: 3px;
  line-height: 13px;
  white-space: nowrap;
  background: ${(props) => (props.$active ? '#bad3ea' : 'none')};

  &:disabled {
    color: #a0a0a0;
  }
`;

const IconSlot = styled.span`
  display: flex;
  align-items: center;
  height: 33px;
  margin-bottom: 3px;
`;

const LabelLine = styled.span`
  display: flex;
  align-items: center;
  justify-content: center;
  gap: 3px;
  min-height: 13px;
`;

const Stack = styled.div<{ $left?: number }>`
  display: flex;
  flex-direction: column;
  padding: 1px 0 0 ${(props) => props.$left ?? 4}px;
`;

const Inline = styled.div`
  display: flex;
  gap: 7px;
`;

const SmallButton = styled.button`
  display: flex;
  align-items: center;
  gap: 4px;
  height: 23px;
  white-space: nowrap;

  &:disabled {
    color: #a0a0a0;
  }
`;

const NavGrid = styled.div`
  display: grid;
  grid-template-columns: 18px 18px;
  grid-auto-rows: 23px;
  gap: 0 5px;
  align-items: center;
  width: 43px;
`;

const Workspace = styled.main`
  display: flex;
  flex: 1;
  gap: 6px;
  padding: 7px 6px 7px 6px;
`;

const Pane = styled.aside<{ $width: number }>`
  display: flex;
  flex-direction: column;
  flex: none;
  width: ${(props) => props.$width}px;
`;

const PaneBody = styled.div`
  flex: 1;
  display: flex;
  flex-direction: column;
  padding: 0 6px;
  border: 1px solid #d4d4d4;
  border-top: 5px solid #cacaca;
  background: #f7f9f8;
`;

const PaneHeader = styled.div`
  display: flex;
  align-items: center;
  gap: 8px;
  height: 20px;

  h2 {
    flex: 1;
    font-size: 16px;
    color: #6c6c6c;
  }

  button {
    padding-bottom: 4px;
  }
`;

const SearchRow = styled.div`
  display: flex;
  align-items: center;
  gap: 6px;
  margin: 13px -3px 0 -4px;
`;

const SearchBox = styled.label`
  display: flex;
  align-items: center;
  gap: 9px;
  flex: 1;
  height: 25px;
  padding: 0 6px 0 5px;
  border: 1px solid #a8a8a8;
  background: #fff;

  input {
    flex: 1;
    min-width: 0;
    outline: 0;
  }

  input::placeholder {
    color: #555;
    font-style: italic;
    opacity: 1;
  }
`;

const ToolStrip = styled.div<{ $left: number; $width: number }>`
  display: flex;
  width: ${(props) => props.$width}px;
  margin-left: ${(props) => props.$left}px;
  border-bottom: 1px solid #d5d5d5;
`;

const StripButton = styled.button<{ $active?: boolean; $height: number }>`
  display: flex;
  align-items: center;
  justify-content: center;
  width: 33px;
  height: ${(props) => props.$height}px;
  border-bottom: 3px solid ${(props) => (props.$active ? '#0070c0' : 'transparent')};
`;

const SectionTitle = styled.h3`
  font-size: 13px;
  font-weight: 600;
  line-height: 18px;
`;

const OrderTitle = styled(SectionTitle)`
  padding: 11px 0 6px 9px;
`;

const TreeRow = styled.div`
  display: flex;
  align-items: center;
  gap: 5px;
  height: 24px;
  margin-left: -3px;
`;

const LayerLine = styled.div`
  display: flex;
  align-items: center;
  gap: 3px;
  margin: 1px -4px 0 8px;
`;

const LayerRow = styled.label`
  display: flex;
  align-items: center;
  gap: 4px;
  flex: 1;
  height: 24px;
  padding-left: 2px;
  border: 1px solid #2d8fd0;
  background: #c5dbed;
`;

const Check = styled.span`
  display: grid;
  place-items: center;

  > * {
    grid-area: 1 / 1;
  }

  input {
    appearance: none;
    width: 14px;
    height: 14px;
    border: 1px solid #888;
    background: #fff;
  }

  svg {
    pointer-events: none;
  }
`;

const LegendTitle = styled.div`
  padding: 4px 0 0 23px;
  font-weight: 600;
`;

const Legend = styled.ul`
  display: grid;
  grid-auto-rows: 1fr;
  height: 246px;
  margin-top: 4px;
  padding-left: 25px;

  li {
    display: flex;
    align-items: center;
    gap: 7px;
  }
`;

const Swatch = styled.span<{ $color: string; $framed?: boolean }>`
  display: block;
  width: ${(props) => (props.$framed ? 20 : 18)}px;
  height: ${(props) => (props.$framed ? 16 : 14)}px;
  background: ${(props) => props.$color};
  ${(props) => (props.$framed ? 'border: 1px solid #fff;' : '')}
`;

const MapPane = styled.section`
  display: flex;
  flex-direction: column;
  flex: 1;
  min-width: 0;
`;

const MapTabs = styled.div`
  display: flex;
  align-items: flex-end;
  justify-content: space-between;
  height: 21px;
  border-bottom: 2px solid #0078d0;
  padding-right: 4px;
`;

const MapTab = styled.button`
  display: flex;
  align-items: center;
  gap: 6px;
  width: 76px;
  height: 20px;
  padding-left: 6px;
  background: #0078d0;
  color: #fff;
`;

const MapCanvas = styled.div`
  display: flex;
  flex: 1;
  align-items: center;
  justify-content: center;
  padding: 0 3px 5px 0;
  border-left: 1px solid #d4d4d4;
  border-right: 1px solid #d4d4d4;
  background: #fff;
`;

const StatusBar = styled.footer`
  display: grid;
  grid-template-columns: 1fr auto 1fr;
  align-items: center;
  height: 25px;
  padding: 0 4px 0 5px;
  border: 1px solid #d4d4d4;
  border-top: 0;
  background: #f7f9f8;
`;

const StatusGroup = styled.div<{ $end?: boolean }>`
  display: flex;
  align-items: center;
  gap: ${(props) => (props.$end ? 7 : 5)}px;
  ${(props) => (props.$end ? 'justify-content: flex-end;' : '')}
`;

const Coordinates = styled(StatusGroup)`
  gap: 10px;
  padding-left: 10px;
`;

const Divider = styled.span`
  width: 1px;
  height: 15px;
  background: #a0a0a0;
`;

const Toggles = styled.div`
  display: flex;
  gap: 3px;
`;

const StatusToggle = styled.button<{ $active?: boolean }>`
  display: flex;
  align-items: center;
  justify-content: center;
  width: 20px;
  height: 20px;
  background: ${(props) => (props.$active ? '#9fd3f4' : 'none')};
`;

const Dropdown = styled.div<{ $width?: number }>`
  display: grid;
  align-items: center;
  ${(props) => (props.$width ? `width: ${props.$width}px;` : 'flex: 1;')}

  > * {
    grid-area: 1 / 1;
  }

  > svg {
    justify-self: end;
    margin-right: 5px;
    pointer-events: none;
  }

  select {
    appearance: none;
    width: 100%;
    height: 22px;
    padding: 0 3px;
    border: 1px solid #a8a8a8;
    border-radius: 0;
    background: #fff;
    font-size: 12px;
  }
`;

const SymbologyHead = styled.div`
  display: flex;
  align-items: center;
  justify-content: space-between;
  margin: 8px 3px 10px 0;

  > button {
    padding-top: 6px;
  }
`;

const PrimarySelect = styled.div`
  display: flex;
  margin: 6px 0 12px 0;
`;

const FormRow = styled.div`
  display: grid;
  grid-template-columns: 85px 1fr 30px;
  align-items: center;

  > button:last-child {
    justify-self: center;
  }
`;

const AddField = styled.button`
  width: 72px;
  height: 24px;
  margin: 6px 0 5px 85px;
  border: 1px solid #cfcfcf;
  background: #fff;
`;

const SchemePicker = styled.button`
  display: flex;
  align-items: center;
  gap: 7px;
  height: 25px;
  padding: 0 4px 0 3px;
  border: 1px solid #a8a8a8;
  background: #fff;
`;

const SchemeStrip = styled.span`
  display: flex;
  flex: 1;
  height: 16px;
`;

const SchemeCell = styled.span<{ $color: string }>`
  flex: 1;
  background: ${(props) => props.$color};
`;

const Splitter = styled.div`
  display: flex;
  align-items: center;
  justify-content: center;
  gap: 3px;
  height: 8px;
  margin-top: 15px;
  border-top: 2px solid #d0d0d0;
  border-bottom: 2px solid #d0d0d0;

  i {
    width: 4px;
    height: 4px;
    border-radius: 50%;
    background: #c2c2c2;
  }
`;

const ClassTabs = styled.div`
  display: flex;
  align-items: flex-end;
  margin-top: 11px;
`;

const ClassTab = styled.button<{ $active?: boolean }>`
  height: ${(props) => (props.$active ? 23 : 20)}px;
  width: ${(props) => (props.$active ? 57 : 46)}px;
  margin-bottom: ${(props) => (props.$active ? -1 : 0)}px;
  border: 1px solid #bdbdbd;
  border-left-width: ${(props) => (props.$active ? 1 : 0)}px;
  border-bottom: 0;
  background: ${(props) => (props.$active ? '#fafafa' : '#f1f1f1')};
  z-index: 1;
`;

const ClassBox = styled.div`
  display: flex;
  flex-direction: column;
  flex: 1;
  margin-bottom: 7px;
  padding: 0 8px 4px 7px;
  border: 1px solid #bdbdbd;
  background: #fafafa;
`;

const ClassTools = styled.div`
  display: flex;
  align-items: center;
  justify-content: flex-end;
  gap: 12px;
  height: 35px;
  padding-right: 4px;
`;

const MoreButton = styled(PlainButton)`
  gap: 8px;
`;

const TableFrame = styled.div`
  flex: 1;
  border: 1px solid #cdcdcd;
`;

const ClassTable = styled.table`
  width: 100%;
  height: 396px;
  table-layout: fixed;
  border-collapse: collapse;
  font-size: 11px;
  border-bottom: 2px solid #d8d8d8;

  th {
    height: 24px;
    padding: 0 6px;
    border-right: 1px solid #c8c8c8;
    border-bottom: 2px solid #c8c8c8;
    background: #dfdfdf;
    font-weight: 600;
    text-align: left;
  }

  td {
    padding: 0 3px;
    border-right: 1px solid #dcdcdc;
    border-bottom: 1px solid #cdcdcd;
  }

  th:last-child, td:last-child {
    border-right: 0;
  }
`;

const GroupCell = styled.td`
  height: 39px;
`;

const GroupField = styled.div`
  display: flex;
  align-items: center;
  gap: 9px;
  padding-left: 3px;

  input {
    width: 103px;
    height: 22px;
    padding: 0 4px;
    border: 1px solid #b8b8b8;
    background: #fff;
    font-size: 12px;
  }
`;

const ClassRow = styled.tr<{ $selected: boolean; $odd: boolean }>`
  background: ${(props) => (props.$selected ? '#c6e1f5' : props.$odd ? '#ebebeb' : '#fff')};

  td {
    ${(props) => (props.$selected ? 'border-color: #98d0f0;' : '')}
  }
`;

const SymbolButton = styled.button`
  display: flex;
  align-items: center;
  justify-content: space-between;
  width: 100%;
  padding: 0 3px 0 17px;
`;

const PaneTabs = styled.div`
  display: flex;
  height: 21px;
  margin-top: -1px;
`;

const PaneTab = styled.button<{ $active?: boolean }>`
  width: ${(props) => (props.$active ? 74 : 55)}px;
  ${(props) => props.$active && `
    border: 1px solid #d0d0d0;
    border-top: 0;
    background: #f7f9f8;
    color: #1073c6;
  `}
`;

/* ---------- parts ---------- */

type BigProps = { icon: ReactNode; lines: string[]; width: number; caret?: 'below' | 'inline'; active?: boolean; disabled?: boolean };

const Big = ({ icon, lines, width, caret, active, disabled }: BigProps) => (
  <BigButton type="button" $width={width} $active={active} disabled={disabled}>
    <IconSlot>{icon}</IconSlot>
    {lines.map((line, i) => (
      <LabelLine key={line}>
        {line}
        {caret === 'inline' && i === lines.length - 1 && <Caret color={disabled ? '#a0a0a0' : '#555'} />}
      </LabelLine>
    ))}
    {caret === 'below' && <LabelLine><Caret color={disabled ? '#a0a0a0' : '#555'} /></LabelLine>}
  </BigButton>
);

const Small = ({ icon, label, caret, disabled }: { icon: ReactNode; label: string; caret?: boolean; disabled?: boolean }) => (
  <SmallButton type="button" disabled={disabled}>
    {icon}
    {label}
    {caret && <Caret />}
  </SmallButton>
);

const RibbonGroup = ({ label, width, launcher, children }: { label: string; width: number; launcher?: boolean; children: ReactNode }) => (
  <Group $width={width}>
    <GroupBody>{children}</GroupBody>
    <GroupLabel $launcher={launcher}>
      {label}
      {launcher && <button type="button" aria-label={`${label} options`}><Launcher /></button>}
    </GroupLabel>
  </Group>
);

const PaneTitle = ({ title }: { title: string }) => (
  <PaneHeader>
    <h2>{title}</h2>
    <button type="button" aria-label="Pane menu"><Icon size={4} w={8}><path d="M0 0h8L4 4z" fill="#555" /></Icon></button>
    <button type="button" aria-label="Auto hide"><Pin /></button>
    <button type="button" aria-label="Close pane"><Cross /></button>
  </PaneHeader>
);

const ZurichMap = () => (
  <svg width="540" height="680" viewBox="0 0 1620 2040" role="img" aria-label="Municipalities Zurich">
    {sheets.map((sheet) => (
      <g key={`${sheet.x}-${sheet.y}`} transform={`translate(${sheet.x} ${sheet.y})`} stroke="#fff" strokeWidth="4" strokeLinejoin="round">
        {sheet.areas.map((area) => <polygon key={area.points} points={area.points} fill={area.color} />)}
        {sheet.lines.map((line) => <polyline key={line} points={line} fill="none" />)}
      </g>
    ))}
  </svg>
);

const contentTools = [
  { name: 'List by drawing order', icon: <Icon size={24}><path d="M3 6v13h12M3 12h12" stroke="#666" strokeWidth="1.500" /><path d="M2 0h8l1 7H0zM14 8h8l1 6H13zM14 16h8l1 6H13z" fill="#e6cd3f" /></Icon> },
  { name: 'List by data source', icon: <Icon size={22}><path d="M.500 4v14c0 4 21 4 21 0V4" fill="#e3e3e3" stroke="#888" /><path d="M15 7v13l6-2V5z" fill="#fff" /><ellipse cx="11" cy="4" rx="10.500" ry="3.500" fill="#f6f6f6" stroke="#888" /></Icon> },
  { name: 'List by selection', icon: <Icon size={21}><path d={parcel} fill="#fff" stroke="#666" /><path d="M1 1h5l6 11-5 8H1z" fill="#cde6f6" /><path d="M6 1l6 11M20 6c-5 0-8 2-8 6l-5 8" stroke="#777" /></Icon> },
  { name: 'List by editing', icon: <Icon size={21}><path d="M1 20l2-5L16 2l3 3L6 18z" fill="#e9cf3c" stroke="#b49a33" /><path d="M16 2l1-1 3 3-1 1z" fill="#e38b7d" /><path d="M1 20l1-3 2 2z" fill="#555" /></Icon> },
  { name: 'List by snapping', icon: <Icon size={24}><path d="M.500.500h17v17H.500zM9 .500v17M.500 9h17" stroke="#777" /><path d="M17.500 11v13M11 17.500h13" stroke="#fff" strokeWidth="4" /><path d="M17.500 11v13M11 17.500h13" stroke="#4f94c4" strokeWidth="1.800" /></Icon> },
  { name: 'List by labeling', icon: <Icon size={24}><path d="M2 12L13 1l9 8-1 4L9 22l-7-3z" fill="#f7dc86" stroke="#b3823f" strokeWidth="1.300" /><path d="M9 11l6-5M11 13l6-5M13 16l5-4" stroke="#b3823f" /><circle cx="6" cy="17" r="2" fill="#fff" stroke="#666" /><path d="M5 18l-4 5" stroke="#666" strokeWidth="1.500" /></Icon> },
  { name: 'List by perspective imagery', icon: <Icon size={25}><path d="M1 24l6-12h10l7 12z" fill="#cde6f6" stroke="#555" /><path d="M6 24l3-9 4-1 1 10z" fill="#48a0d8" /><path d="M14 24l3-7 5 7z" fill="#77b98b" /><path d="M4 4l4-3 5 5-4 3zM16 15l4-3 5 5-4 3z" fill="#fff" stroke="#555" /><path d="M10 11l5-4 4 4-4 4z" fill="#444" /></Icon> },
];

const symbologyTools = [
  { name: 'Primary symbology', icon: <Icon size={25}><path d="M4 2c5-2 10 1 17 0l3 17c-8-2-15 3-23 1z" fill="#e6d454" /><path d="M20 10L9 19" stroke="#666" strokeWidth="2.200" /><path d="M10 17c-3 0-3 3-7 6 4 1 8 0 9-4z" fill="#9a6237" /></Icon> },
  { name: 'Vary by attribute', icon: <Icon size={25}><path d="M.500 1.500h17v17H.500z" fill="#7fc183" stroke="#4d9b56" /><path d="M13 8l11 5-5 11-11-6z" fill="#d6eed6" stroke="#69ad6f" /></Icon> },
  { name: 'Symbol layer drawing', icon: <Icon size={25}><path d="M6 1v23M10 1v23M16 1v16c0 1-1 2-3 2h-3M20 1v16c0 4-2 6-7 6h-3M1 17h5M1 22h5" stroke="#777" /><path d="M1 7.500h23v4H1z" fill="#b9dcf2" stroke="#888" /></Icon> },
  { name: 'Display filters', icon: <FunnelIcon size={24} /> },
  { name: 'Advanced options', icon: <Icon size={25} w={26}><path d="M18 1L8 10" stroke="#666" strokeWidth="2" /><path d="M8 8c-3 0-3 3-7 4 3 3 8 1 9-2z" fill="#9a6237" /><path d="M9.500 22.500v-11l4 2h12v9z" fill="#fff" stroke="#666" /><path d="M12 16h2M12 19.500h2" stroke="#5c4fb0" strokeWidth="1.500" /><path d="M16 16.500h7M16 19.500h7" stroke="#888" /></Icon> },
];

const Contents = () => {
  const [visible, setVisible] = useState<boolean>(true);

  return (
    <Pane $width={266} aria-label="Contents">
      <PaneBody>
        <PaneTitle title="Contents" />
        <SearchRow>
          <FunnelIcon />
          <SearchBox>
            <input type="search" placeholder="Search" aria-label="Search" />
            <Icon size={13}><circle cx="8" cy="5" r="4" stroke="#555" strokeWidth="1.500" /><path d="M5 8l-4 4" stroke="#555" strokeWidth="2.200" /></Icon>
            <Caret color="#b5b5b5" />
          </SearchBox>
        </SearchRow>
        <ToolStrip $left={9} $width={229}>
          {contentTools.map((tool, i) => (
            <StripButton type="button" key={tool.name} aria-label={tool.name} $active={i === 0} $height={43}>{tool.icon}</StripButton>
          ))}
        </ToolStrip>
        <OrderTitle>Drawing Order</OrderTitle>
        <TreeRow>
          <Icon size={6} w={7}><path d="M7 0v6H0z" fill="#555" /></Icon>
          <MapIcon />
          Map
        </TreeRow>
        <LayerLine>
          <Icon size={6} w={7}><path d="M7 0v6H0z" fill="#555" /></Icon>
          <LayerRow>
            <Check>
              <input type="checkbox" checked={visible} onChange={() => setVisible(!visible)} />
              {visible && <Icon size={10}><path d="M1 5l3 4 5-8" stroke="#555" strokeWidth="1.500" /></Icon>}
            </Check>
            Municipalities Zurich
          </LayerRow>
        </LayerLine>
        <LegendTitle>Bezirk</LegendTitle>
        <Legend>
          {districts.map((district) => (
            <li key={district.name}><Swatch $color={district.color} />{district.name}</li>
          ))}
        </Legend>
      </PaneBody>
    </Pane>
  );
};

const MapView = () => (
  <MapPane>
    <MapTabs>
      <MapTab type="button"><MapIcon />Map<Cross color="#cfe6f8" /></MapTab>
      <button type="button" aria-label="Open views"><Icon size={10} w={8}><path d="M0 0h8L4 4z" fill="#888" /></Icon></button>
    </MapTabs>
    <MapCanvas><ZurichMap /></MapCanvas>
    <StatusBar>
      <StatusGroup>
        <Dropdown $width={103}>
          <select aria-label="Map scale"><option>1:350'000</option></select>
          <Caret />
        </Dropdown>
        <Divider />
        <Toggles>
          <StatusToggle type="button" $active aria-label="Snapping"><Icon><path d="M.500.500h10v10H.500zM5.500.500v10M.500 5.500h10" stroke="#5b7f98" /><path d="M12 8v8M8 12h8" stroke="#4a6a80" strokeWidth="1.500" /></Icon></StatusToggle>
          <StatusToggle type="button" aria-label="Dynamic constraints"><Icon><path d="M1 2h4v3H1zM11 7h4v3h-4z" stroke="#555" /><path d="M3 12l5-6 4 1M6 11l3-2" stroke="#56a5d8" strokeDasharray="2 1" /><path d="M13 0v5M10 2.500h5" stroke="#555" /><path d="M1 14.500h15" stroke="#9fd3f4" strokeWidth="2" /><path d="M0 13h3v3H0z" fill="#3c9147" /></Icon></StatusToggle>
          <StatusToggle type="button" aria-label="Grid"><Icon size={14}><path d="M.500.500h13v13H.500zM3.500 0v14M6.500 0v14M9.500 0v14M0 3.500h14M0 6.500h14M0 9.500h14" stroke="#aaa" /></Icon></StatusToggle>
          <StatusToggle type="button" aria-label="North up"><Icon w={17}><path d="M1.500 11V4.500l4 6V4" stroke="#3a98d6" strokeWidth="2" /><path d="M8.500 0v16M9 15l7-7" stroke="#777" /><path d="M10 2c3 0 3 2 3 5M11 5l2 2 2-3" stroke="#3a98d6" strokeWidth="1.300" /></Icon></StatusToggle>
        </Toggles>
        <Divider />
      </StatusGroup>
      <Coordinates>
        2'705'528.74E 1'288'496.95N m
        <button type="button" aria-label="Coordinate format"><Icon size={8} w={10}><path d="M1 2l4 4 4-4" stroke="#555" strokeWidth="2" /></Icon></button>
      </Coordinates>
      <StatusGroup $end>
        <Divider />
        <SmallButton type="button" disabled><ZoomSelIcon color="#8fb9d6" />Selected Features: 0</SmallButton>
        <Divider />
        <button type="button" aria-label="Pause drawing"><Icon size={14} w={12}><path d="M0 0h4v14H0zM7 0h4v14H7z" fill="#5a5a5a" /></Icon></button>
        <Divider />
        <button type="button" aria-label="Refresh"><Icon size={17}><path d="M2 7a6.500 6.500 0 0111-3M15 10a6.500 6.500 0 01-11 3" stroke="#3a98d6" strokeWidth="2.500" /><path d="M16 0v7H9zM1 17v-7h7z" fill="#3a98d6" /></Icon></button>
      </StatusGroup>
    </StatusBar>
  </MapPane>
);

const Symbology = () => (
  <Pane $width={398} aria-label="Symbology">
    <PaneBody>
      <PaneTitle title="Symbology - Municipalities Zurich" />
      <SymbologyHead>
        <ToolStrip $left={4} $width={165}>
          {symbologyTools.map((tool, i) => (
            <StripButton type="button" key={tool.name} aria-label={tool.name} $active={i === 0} $height={41}>{tool.icon}</StripButton>
          ))}
        </ToolStrip>
        <button type="button" aria-label="Symbology menu"><Icon size={14}><path d="M0 2h14M0 7h14M0 12h14" stroke="#555" strokeWidth="3" /></Icon></button>
      </SymbologyHead>
      <SectionTitle>Primary symbology</SectionTitle>
      <PrimarySelect>
        <Dropdown>
          <select aria-label="Primary symbology"><option>Unique Values</option></select>
          <Caret />
        </Dropdown>
      </PrimarySelect>
      <FormRow>
        <label htmlFor="field-1">Field 1</label>
        <Dropdown>
          <select id="field-1"><option>Bezirk</option></select>
          <Caret />
        </Dropdown>
        <button type="button" aria-label="Set expression"><Icon size={17}><path d="M.500.500h16v16H.500z" fill="#fff" stroke="#666" /><path d="M3 4.500c5-2 5 8 10 7.500M13 4L4 13" stroke="#3c9147" strokeWidth="1.500" /></Icon></button>
      </FormRow>
      <div><AddField type="button">Add field</AddField></div>
      <FormRow>
        <span id="scheme-label">Color scheme</span>
        <SchemePicker type="button" aria-labelledby="scheme-label">
          <SchemeStrip>{scheme.map((color) => <SchemeCell key={color} $color={color} />)}</SchemeStrip>
          <Caret />
        </SchemePicker>
        <button type="button" aria-label="Scheme options"><Icon size={17}><circle cx="8.500" cy="8.500" r="5.500" stroke="#777" strokeWidth="1.300" /><circle cx="8.500" cy="8.500" r="2.500" stroke="#777" strokeWidth="1.300" /><circle cx="8.500" cy="8.500" r="7" stroke="#777" strokeWidth="2.500" strokeDasharray="2.500 3" /></Icon></button>
      </FormRow>
      <Splitter><i /><i /><i /></Splitter>
      <ClassTabs>
        <ClassTab type="button" $active>Classes</ClassTab>
        <ClassTab type="button">Scales</ClassTab>
      </ClassTabs>
      <ClassBox>
        <ClassTools>
          <button type="button" aria-label="Add all values"><Icon size={17}><path d="M.500 1.500h8v15h-8z" fill="#fff" stroke="#666" /><path d="M1 4.500h7M1 13h7" stroke="#666" strokeWidth="2" /><path d="M1 7.500h7" stroke="#8a7ac0" strokeWidth="2" /><path d="M1 10.500h7" stroke="#e09148" strokeWidth="2" /><path d="M12 1v6M9 4h6" stroke="#555" strokeWidth="1.500" /><path d="M14.500 9v6M12.500 13l2 2 2-2" stroke="#3a98d6" /></Icon></button>
          <button type="button" aria-label="Add values"><Icon size={13}><path d="M6.500 0v13M0 6.500h13" stroke="#4aa556" strokeWidth="2" /></Icon></button>
          <button type="button" aria-label="Move up" disabled><Icon size={12}><path d="M6 12V1M2 5l4-4 4 4" stroke="#b5b5b5" strokeWidth="1.700" /></Icon></button>
          <button type="button" aria-label="Move down"><Icon size={12}><path d="M6 0v11M2 7l4 4 4-4" stroke="#555" strokeWidth="1.700" /></Icon></button>
          <button type="button" aria-label="Toolbar options"><Icon size={20} w={12}><path d="M0 0h12v20H0z" fill="#f1f1f1" /><path d="M4 11.500h5" stroke="#aaa" /><path d="M4 14h5l-2.500 3z" fill="#aaa" /></Icon></button>
          <MoreButton type="button">More<Icon size={4} w={7}><path d="M0 0h7L3.500 4z" fill="#444" /></Icon></MoreButton>
        </ClassTools>
        <TableFrame>
          <ClassTable>
            <colgroup>
              <col width="82" /><col width="102" /><col width="103" /><col width="51" /><col />
            </colgroup>
            <thead>
              <tr><th>Symbol</th><th>Value</th><th>Label</th><th>Count</th><th aria-label="Spacer" /></tr>
            </thead>
            <tbody>
              <tr>
                <GroupCell colSpan={5}>
                  <GroupField>
                    <Icon size={8} w={10}><path d="M1 1l4 4 4-4" stroke="#555" strokeWidth="1.800" /></Icon>
                    <input type="text" defaultValue="Bezirk" aria-label="Group heading" />
                    12 values
                    <button type="button" aria-label="Remove group"><Cross color="#888" /></button>
                  </GroupField>
                </GroupCell>
              </tr>
              {districts.map((district, i) => (
                <ClassRow key={district.name} $selected={i === 0} $odd={i % 2 === 1}>
                  <td>
                    <SymbolButton type="button" aria-label={`${district.name} symbol`}>
                      <Swatch $color={district.color} $framed />
                      <Caret />
                    </SymbolButton>
                  </td>
                  <td>{district.name}</td>
                  <td>{district.name}</td>
                  <td>{district.count}</td>
                  <td />
                </ClassRow>
              ))}
            </tbody>
          </ClassTable>
        </TableFrame>
      </ClassBox>
    </PaneBody>
    <PaneTabs>
      <PaneTab type="button">Catalog</PaneTab>
      <PaneTab type="button" $active>Symbology</PaneTab>
    </PaneTabs>
  </Pane>
);

const tabs = ['Insert', 'Analysis', 'View', 'Edit', 'Imagery', 'Share'];

const App = () => (
  <>
    <GlobalStyle />
    <Window>
      <Header>
        <HeaderColumn $width={547}>
          <TitleRow>
            <QuickAccess>
              <button type="button" aria-label="New project"><FolderIcon extra="new" /></button>
              <button type="button" aria-label="Open project"><FolderIcon /></button>
              <button type="button" aria-label="Save project"><FolderIcon extra="save" /></button>
              <PlainButton type="button" aria-label="Undo"><UndoIcon color="#3f95cf" /><Caret /></PlainButton>
              <PlainButton type="button" aria-label="Redo"><UndoIcon color="#a9d0e9" flip /><Caret /></PlainButton>
              <PlainButton type="button" aria-label="Explore"><ExploreIcon size={16} /><Caret /></PlainButton>
              <button type="button" aria-label="Customize toolbar"><Icon size={8} w={6}><path d="M0 1h6" stroke="#444" /><path d="M0 3h6L3 7z" fill="#444" /></Icon></button>
            </QuickAccess>
            <AppTitle>NoData - Map - ArcGIS Pro</AppTitle>
          </TitleRow>
          <Tabs>
            <Tab type="button" $kind="project">Project</Tab>
            <Tab type="button" $kind="active">Map</Tab>
            {tabs.map((tab) => <Tab type="button" key={tab}>{tab}</Tab>)}
          </Tabs>
        </HeaderColumn>
        <ContextColumn>
          <ContextTitle>Feature Layer</ContextTitle>
          <Tabs $spread>
            <Tab type="button" $tight>Appearance</Tab>
            <Tab type="button" $tight>Labeling</Tab>
            <Tab type="button" $tight>Data</Tab>
          </Tabs>
        </ContextColumn>
        <HeaderColumn>
          <WindowControls>
            <button type="button" aria-label="Help">?</button>
            <button type="button" aria-label="Minimize"><Icon size={11}><path d="M0 5.500h11" stroke="#444" /></Icon></button>
            <button type="button" aria-label="Maximize"><Icon size={11}><path d="M.500.500h10v10H.500z" stroke="#444" /></Icon></button>
            <button type="button" aria-label="Close"><Icon size={11}><path d="M0 0l11 11M11 0L0 11" stroke="#444" /></Icon></button>
          </WindowControls>
          <UserRow>
            <PlainButton type="button">
              <Icon size={16} w={10}><circle cx="5" cy="3" r="2.300" stroke="#4c9a52" /><path d="M1 6.500h8v5H7.500v4h-5v-4H1z" fill="#bfe3bf" stroke="#4c9a52" /></Icon>
              Till (Esri Schweiz)
              <Caret />
            </PlainButton>
            <button type="button" aria-label="Notifications"><Icon size={16} w={14}><path d="M1 12.500h12l-2-3V6c0-6-8-6-8 0v3.500zM5.500 14h3M7 0v2" stroke="#666" /></Icon></button>
            <button type="button" aria-label="Collapse ribbon"><Icon size={7} w={10}><path d="M1 6l4-4 4 4" stroke="#555" strokeWidth="1.800" /></Icon></button>
          </UserRow>
        </HeaderColumn>
      </Header>

      <Ribbon>
        <RibbonGroup label="Clipboard" width={131}>
          <Big icon={<PasteIcon />} lines={['Paste']} width={37} caret="below" disabled />
          <Stack>
            <Small icon={<CutIcon />} label="Cut" disabled />
            <Small icon={<CopyIcon />} label="Copy" disabled />
            <Small icon={<CopyPathIcon />} label="Copy Path" disabled />
          </Stack>
        </RibbonGroup>
        <RibbonGroup label="Navigate" width={208} launcher>
          <Big icon={<ExploreIcon />} lines={['Explore']} width={49} caret="below" />
          <NavGrid>
            <button type="button" aria-label="Full extent"><GlobeIcon /></button>
            <button type="button" aria-label="Zoom to selection"><ZoomSelIcon /></button>
            <button type="button" aria-label="Fixed zoom in"><FixedZoomIcon kind="in" /></button>
            <button type="button" aria-label="Fixed zoom out"><FixedZoomIcon kind="out" /></button>
            <button type="button" aria-label="Previous extent"><BackIcon color="#56a5d8" /></button>
            <button type="button" aria-label="Next extent"><BackIcon color="#c9c9c9" flip /></button>
          </NavGrid>
          <Big icon={<BookIcon />} lines={['Bookmarks']} width={69} caret="below" />
          <Big icon={<GoToIcon />} lines={['Go', 'To XY']} width={38} />
        </RibbonGroup>
        <RibbonGroup label="Layer" width={235}>
          <Big icon={<BasemapIcon />} lines={['Basemap']} width={55} caret="below" />
          <Big icon={<AddDataIcon />} lines={['Add', 'Data']} width={39} caret="inline" />
          <Stack $left={3}>
            <Small icon={<PresetIcon />} label="Add Preset" caret />
            <Small icon={<GraphicsIcon />} label="Add Graphics Layer" />
          </Stack>
        </RibbonGroup>
        <RibbonGroup label="Selection" width={244} launcher>
          <Big icon={<SelectIcon />} lines={['Select']} width={39} caret="below" active />
          <Big icon={<SelectAttrIcon />} lines={['Select By', 'Attributes']} width={60} />
          <Big icon={<SelectLocIcon />} lines={['Select By', 'Location']} width={55} />
          <Stack $left={3}>
            <Small icon={<AttributesIcon />} label="Attributes" />
            <Small icon={<ClearIcon />} label="Clear" disabled />
          </Stack>
        </RibbonGroup>
        <RibbonGroup label="Inquiry" width={247}>
          <Big icon={<MeasureIcon />} lines={['Measure']} width={54} caret="below" />
          <Big icon={<LocateIcon />} lines={['Locate']} width={43} caret="below" />
          <Big icon={<InfographicsIcon />} lines={['Infographics']} width={73} caret="below" />
          <Big icon={<CoordIcon />} lines={['Coordinate', 'Conversion']} width={68} />
        </RibbonGroup>
        <RibbonGroup label="Labeling" width={171} launcher>
          <Stack $left={3}>
            <Inline>
              <Small icon={<TagIcon mark="pause" />} label="Pause" />
              <Small icon={<TagIcon mark="lock" />} label="Lock" />
            </Inline>
            <Small icon={<TagIcon mark="cross" />} label="View Unplaced" />
            <Small icon={<TagIcon />} label="More" caret />
          </Stack>
          <Big icon={<ConvertIcon />} lines={['Convert']} width={50} caret="below" />
        </RibbonGroup>
        <RibbonGroup label="Offline" width={142} launcher>
          <Big icon={<DownloadIcon />} lines={['Download', 'Map']} width={61} caret="inline" disabled />
          <Stack $left={3}>
            <Small icon={<SyncIcon />} label="Sync" disabled />
            <Small icon={<SyncIcon remove />} label="Remove" disabled />
          </Stack>
        </RibbonGroup>
      </Ribbon>

      <Workspace>
        <Contents />
        <MapView />
        <Symbology />
      </Workspace>
    </Window>
  </>
);

export default App;
